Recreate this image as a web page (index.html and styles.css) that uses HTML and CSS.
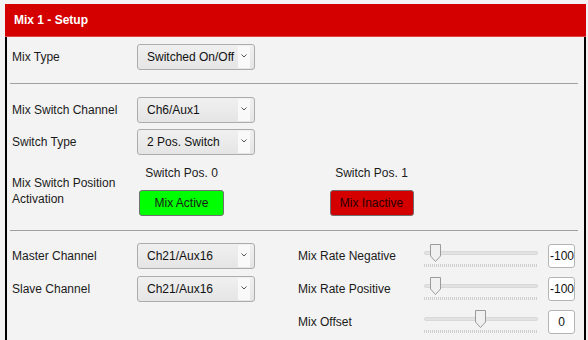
FILE: index.html
```html
<!DOCTYPE html>
<html lang="en">
<head>
    <meta charset="UTF-8">
    <title>Mix 1 - Setup</title>
    <link rel="stylesheet" href="styles.css">
</head>
<body>
    <div class="panel">
        <div class="panel-header">Mix 1 - Setup</div>

        <div class="panel-body">
            <!-- Type -->
            <div class="section section-type">
                <div class="row">
                    <div class="label">Mix Type</div>
                    <div class="select"><span class="select-text">Switched On/Off</span><span class="select-arrow"><svg width="6" height="4" viewBox="0 0 6 4"><path d="M0.5 0.5 L3 3 L5.5 0.5" fill="none" stroke="#555" stroke-width="1"/></svg></span></div>
                </div>
            </div>

            <!-- Switch -->
            <div class="section section-switch">
                <div class="row">
                    <div class="label">Mix Switch Channel</div>
                    <div class="select"><span class="select-text">Ch6/Aux1</span><span class="select-arrow"><svg width="6" height="4" viewBox="0 0 6 4"><path d="M0.5 0.5 L3 3 L5.5 0.5" fill="none" stroke="#555" stroke-width="1"/></svg></span></div>
                </div>
                <div class="row">
                    <div class="label">Switch Type</div>
                    <div class="select"><span class="select-text">2 Pos. Switch</span><span class="select-arrow"><svg width="6" height="4" viewBox="0 0 6 4"><path d="M0.5 0.5 L3 3 L5.5 0.5" fill="none" stroke="#555" stroke-width="1"/></svg></span></div>
                </div>
                <div class="activation">
                    <div class="label label-multi">Mix Switch Position<br>Activation</div>
                    <div class="pos-group">
                        <div class="pos-title">Switch Pos. 0</div>
                        <div class="pos-btn active">Mix Active</div>
                    </div>
                    <div class="pos-group">
                        <div class="pos-title">Switch Pos. 1</div>
                        <div class="pos-btn inactive">Mix Inactive</div>
                    </div>
                </div>
            </div>

            <!-- Channels / rates -->
            <div class="section section-mix">
                <div class="label">Master Channel</div>
                <div class="select"><span class="select-text">Ch21/Aux16</span><span class="select-arrow"><svg width="6" height="4" viewBox="0 0 6 4"><path d="M0.5 0.5 L3 3 L5.5 0.5" fill="none" stroke="#555" stroke-width="1"/></svg></span></div>
                <div></div>
                <div class="label">Mix Rate Negative</div>
                <div class="slider">
                    <div class="track"></div>
                    <svg class="thumb" style="left: 6px" width="11" height="18" viewBox="0 0 11 18"><path d="M0.5 0.5 H10.5 V12 L5.5 17.5 L0.5 12 Z" fill="#f0f0f0" stroke="#9a9a9a"/></svg>
                    <div class="ticks"></div>
                </div>
                <div></div>
                <div class="value clip">-100</div>

                <div class="label">Slave Channel</div>
                <div class="select"><span class="select-text">Ch21/Aux16</span><span class="select-arrow"><svg width="6" height="4" viewBox="0 0 6 4"><path d="M0.5 0.5 L3 3 L5.5 0.5" fill="none" stroke="#555" stroke-width="1"/></svg></span></div>
                <div></div>
                <div class="label">Mix Rate Positive</div>
                <div class="slider">
                    <div class="track"></div>
                    <svg class="thumb" style="left: 6px" width="11" height="18" viewBox="0 0 11 18"><path d="M0.5 0.5 H10.5 V12 L5.5 17.5 L0.5 12 Z" fill="#f0f0f0" stroke="#9a9a9a"/></svg>
                    <div class="ticks"></div>
                </div>
                <div></div>
                <div class="value clip">-100</div>

                <div></div>
                <div></div>
                <div></div>
                <div class="label">Mix Offset</div>
                <div class="slider">
                    <div class="track"></div>
                    <svg class="thumb" style="left: 51px" width="11" height="18" viewBox="0 0 11 18"><path d="M0.5 0.5 H10.5 V12 L5.5 17.5 L0.5 12 Z" fill="#f0f0f0" stroke="#9a9a9a"/></svg>
                    <div class="ticks"></div>
                </div>
                <div></div>
                <div class="value">0</div>
            </div>
        </div>
    </div>
</body>
</html>
```

FILE: styles.css
```css
* {
    margin: 0;
    padding: 0;
    box-sizing: border-box;
}

html, body {
    height: 100%;
    overflow: hidden;
}

body {
    background-color: #f3f3f3;
    color: #1b1b1b;
    font-family: 'Liberation Sans', Arial, sans-serif;
    font-size: 12px;
}

.panel {
    margin: 4px 0 0 5px;
    width: 581px;
}

.panel-header {
    background-color: #d40000;
    color: #fff;
    font-weight: 700;
    height: 33px;
    line-height: 33px;
    padding-left: 9px;
    border-bottom: 1px solid #e04545;
}

.panel-body {
    border-left: 2px solid #000;
    border-right: 2px solid #000;
    min-height: 320px;
}

.section {
    margin: 0 6px 0 3px;
    border-bottom: 1px solid #a0a0a0;
}

.section-type {
    padding: 7px 0 13px;
}

.section-switch {
    padding: 13px 0 14px;
}

.section-mix {
    border-bottom: none;
    padding-top: 12px;
    display: grid;
    grid-template-columns: 127px 118px 43px 126px 114px 10px 27px;
    grid-auto-rows: 26px;
    row-gap: 7px;
    align-items: center;
}

.row {
    display: flex;
    align-items: center;
    height: 26px;
}

.row + .row {
    margin-top: 6px;
}

.label {
    width: 127px;
    padding-left: 2px;
    white-space: nowrap;
}

.section-mix .label {
    width: auto;
    padding-left: 2px;
}

.section-mix .label:nth-child(7n+4) {
    padding-left: 0;
}

.select {
    width: 118px;
    height: 26px;
    border: 1px solid #acacac;
    border-radius: 3px;
    background: linear-gradient(#f0f0f0, #e5e5e5);
    display: flex;
    align-items: stretch;
    overflow: hidden;
}

.select-text {
    flex: 1;
    padding-left: 9px;
    line-height: 25px;
    white-space: nowrap;
    overflow: hidden;
    color: #111;
}

.select-arrow {
    width: 12px;
    margin: 1px 4px 1px 0;
    background-color: #f9f9f9;
    display: flex;
    justify-content: center;
    padding-top: 8px;
}

.select-arrow svg {
    display: block;
}

.activation {
    display: flex;
    height: 61px;
}

.label-multi {
    margin-top: 20px;
    line-height: 16px;
}

.pos-group {
    width: 85px;
    display: flex;
    flex-direction: column;
    align-items: center;
    padding-top: 10px;
    gap: 9px;
    margin-left: 2px;
}

.pos-group + .pos-group {
    margin-left: 105px;
}

.pos-title {
    line-height: 16px;
    white-space: nowrap;
}

.pos-btn {
    width: 85px;
    height: 26px;
    line-height: 25px;
    text-align: center;
    border: 1px solid #707070;
    border-radius: 3px;
    color: #1a1a1a;
}

.pos-btn.active {
    background-color: #00ff00;
}

.pos-btn.inactive {
    width: 84px;
    background-color: #d40000;
    color: #2a0000;
}

.slider {
    position: relative;
    height: 26px;
}

.track {
    position: absolute;
    left: 0;
    right: 0;
    top: 8px;
    height: 4px;
    background-color: #e2e2e2;
    border: 1px solid #d8d8d8;
    border-radius: 2px;
}

.thumb {
    position: absolute;
    top: 1px;
    display: block;
}

.ticks {
    position: absolute;
    left: 0;
    right: 0;
    top: 21px;
    height: 3px;
    background: repeating-linear-gradient(90deg, #cfcfcf 0 1px, transparent 1px 2px);
}

.value {
    height: 24px;
    line-height: 22px;
    background-color: #fff;
    border: 1px solid #b4b4b4;
    border-radius: 3px;
    text-align: center;
    color: #111;
    overflow: hidden;
    white-space: nowrap;
}

.value.clip {
    text-align: left;
    padding-left: 1px;
}
```
